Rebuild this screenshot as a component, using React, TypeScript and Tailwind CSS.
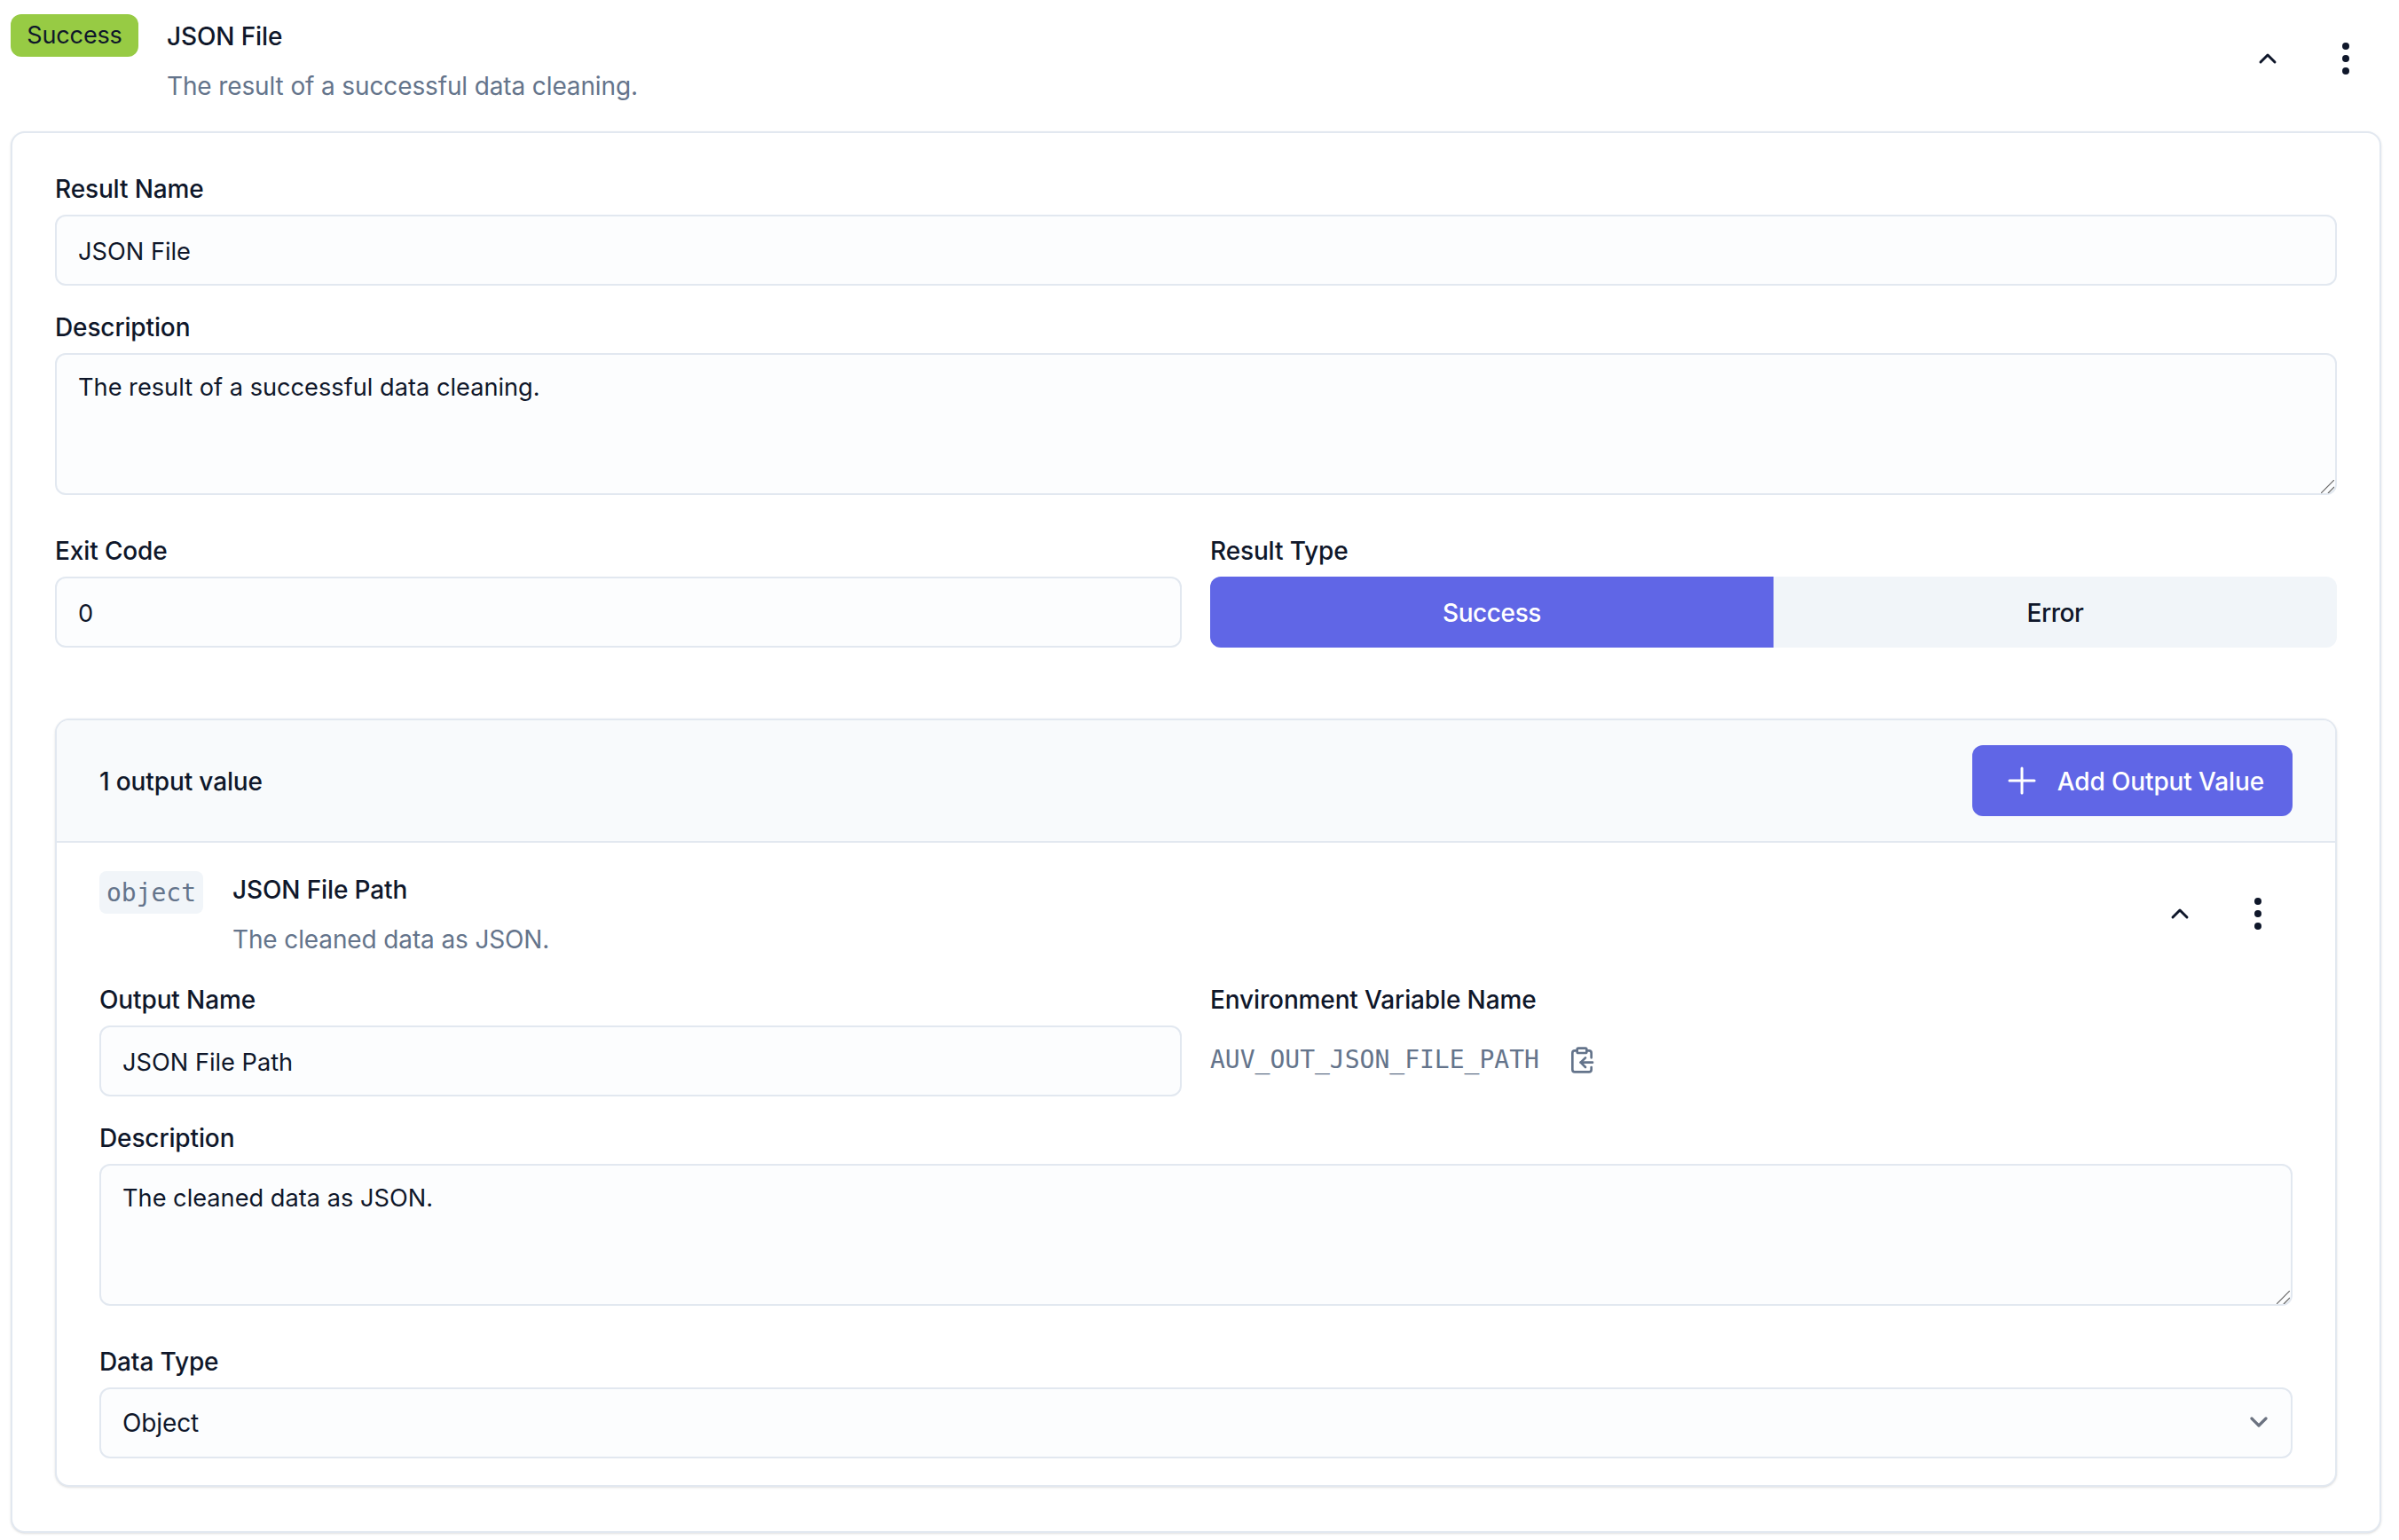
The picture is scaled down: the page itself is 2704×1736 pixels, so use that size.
import { ChevronDown, ChevronUp, ClipboardCopy, EllipsisVertical, Plus } from 'lucide-react';

const inputClass =
  'block w-full h-[80px] px-[24px] pt-[2px] rounded-[12px] border-2 border-[#e2e8f0] bg-[#fcfdfe] text-[27.2px] tracking-normal text-[#0f172a] outline-none';
const selectClass =
  'block w-full h-[80px] px-[24px] rounded-[12px] border-2 border-[#e2e8f0] bg-[#fcfdfe] text-[28px] text-[#0f172a] outline-none appearance-none';
const textareaClass =
  'block w-full h-[160px] px-[24px] pt-[17px] pb-[15px] leading-[40px] rounded-[12px] border-2 border-[#e2e8f0] bg-[#fcfdfe] text-[27.2px] tracking-normal text-[#0f172a] outline-none resize-none';
const labelClass = 'block h-[40px] mb-[10px] text-[28px] leading-[42px] font-medium text-[#0f172a]';

function Actions({ className }: { className: string }) {
  return (
    <div className={`flex items-center gap-[48px] text-[#0f172a] ${className}`}>
      <ChevronUp size={32} strokeWidth={2.2} />
      <EllipsisVertical size={48} strokeWidth={2} />
    </div>
  );
}

function TextArea({ value }: { value: string }) {
  return (
    <div className="relative">
      <textarea className={textareaClass} defaultValue={value} readOnly />
      <svg width="15" height="15" viewBox="0 0 15 15" className="absolute right-[3px] bottom-[2px] text-[#666666]">
        <path d="M0 15 15 0M8 15 15 8" stroke="currentColor" strokeWidth="1.2" fill="none" />
      </svg>
    </div>
  );
}

export default function App() {
  return (
    <div className="w-[2704px] h-[1736px] bg-white overflow-hidden tracking-[-0.008em] font-['Inter',sans-serif]">
      <div className="flex items-start pl-[12px] pr-[36px] pt-[16px] h-[148px]">
        <span className="flex items-center justify-center w-[144px] h-[48px] pt-[1px] rounded-[12px] bg-[#97cb44] text-[27px] text-[#0f172a]">
          Success
        </span>
        <div className="ml-[32px] pt-[5px]">
          <div className="text-[28px] leading-[40px] font-medium text-[#0f172a]">JSON File</div>
          <div className="mt-[16px] text-[28px] leading-[40px] text-[#64748b]">
            The result of a successful data cleaning.
          </div>
        </div>
        <Actions className="ml-auto mt-[26px]" />
      </div>

      <div className="ml-[12px] mr-[20px] h-[1580px] rounded-[16px] border-2 border-[#e2e8f0] bg-white shadow-sm px-[48px] pt-[42px]">
        <label className={labelClass}>Result Name</label>
        <input className={inputClass} defaultValue="JSON File" readOnly />

        <label className={`${labelClass} mt-[26px]`}>Description</label>
        <TextArea value="The result of a successful data cleaning." />

        <div className="grid grid-cols-2 gap-[32px] mt-[42px]">
          <div>
            <label className={labelClass}>Exit Code</label>
            <input className={inputClass} defaultValue="0" readOnly />
          </div>
          <div>
            <label className={labelClass}>Result Type</label>
            <div className="grid grid-cols-2 h-[80px] pt-0 rounded-[12px] overflow-hidden text-[28px] tracking-[-0.015em] font-medium">
              <div className="flex items-center justify-center pt-[2px] bg-[#6066e6] text-white">Success</div>
              <div className="flex items-center justify-center pt-[2px] bg-[#f1f5f9] text-[#0f172a]">Error</div>
            </div>
          </div>
        </div>

        <div className="mt-[80px] h-[866px] rounded-[16px] border-2 border-[#e2e8f0] bg-white shadow-sm overflow-hidden">
          <div className="flex items-center justify-between h-[138px] px-[48px] bg-[#f8fafc] border-b-2 border-[#e2e8f0]">
            <span className="pt-[2px] text-[28px] font-medium text-[#0f172a]">1 output value</span>
            <button className="flex items-center gap-[16px] h-[80px] px-[32px] rounded-[12px] bg-[#6066e6] text-[28px] font-medium text-white">
              <Plus size={48} strokeWidth={1.5} />
              <span className="pt-[2px]">Add Output Value</span>
            </button>
          </div>

          <div className="px-[48px] pt-[32px]">
            <div className="flex items-start h-[124px]">
              <span className="flex items-center justify-center w-[117px] h-[48px] pt-[2px] rounded-[8px] bg-[#f1f5f9] font-['DejaVu_Sans_Mono',monospace] text-[28px] tracking-normal text-[#64748b]">
                object
              </span>
              <div className="ml-[33px] pt-[1px]">
                <div className="text-[28px] leading-[40px] font-medium text-[#0f172a]">JSON File Path</div>
                <div className="mt-[16px] text-[28px] leading-[40px] text-[#64748b]">The cleaned data as JSON.</div>
              </div>
              <Actions className="ml-auto mt-[24px] mr-[15px]" />
            </div>

            <div className="grid grid-cols-2 gap-[32px]">
              <div>
                <label className={labelClass}>Output Name</label>
                <input className={inputClass} defaultValue="JSON File Path" readOnly />
              </div>
              <div>
                <label className={labelClass}>Environment Variable Name</label>
                <div className="flex items-center gap-[32px] h-[78px]">
                  <span className="font-['DejaVu_Sans_Mono',monospace] text-[28px] tracking-normal text-[#64748b]">
                    AUV_OUT_JSON_FILE_PATH
                  </span>
                  <ClipboardCopy size={32} className="text-[#64748b]" />
                </div>
              </div>
            </div>

            <label className={`${labelClass} mt-[26px]`}>Description</label>
            <TextArea value="The cleaned data as JSON." />

            <label className={`${labelClass} mt-[42px]`}>Data Type</label>
            <div className="relative">
              <select className={selectClass} defaultValue="Object">
                <option>Object</option>
              </select>
              <ChevronDown size={32} strokeWidth={2.4} className="absolute right-[22px] top-[23px] text-[#6b7280]" />
            </div>
          </div>
        </div>
      </div>
    </div>
  );
}
